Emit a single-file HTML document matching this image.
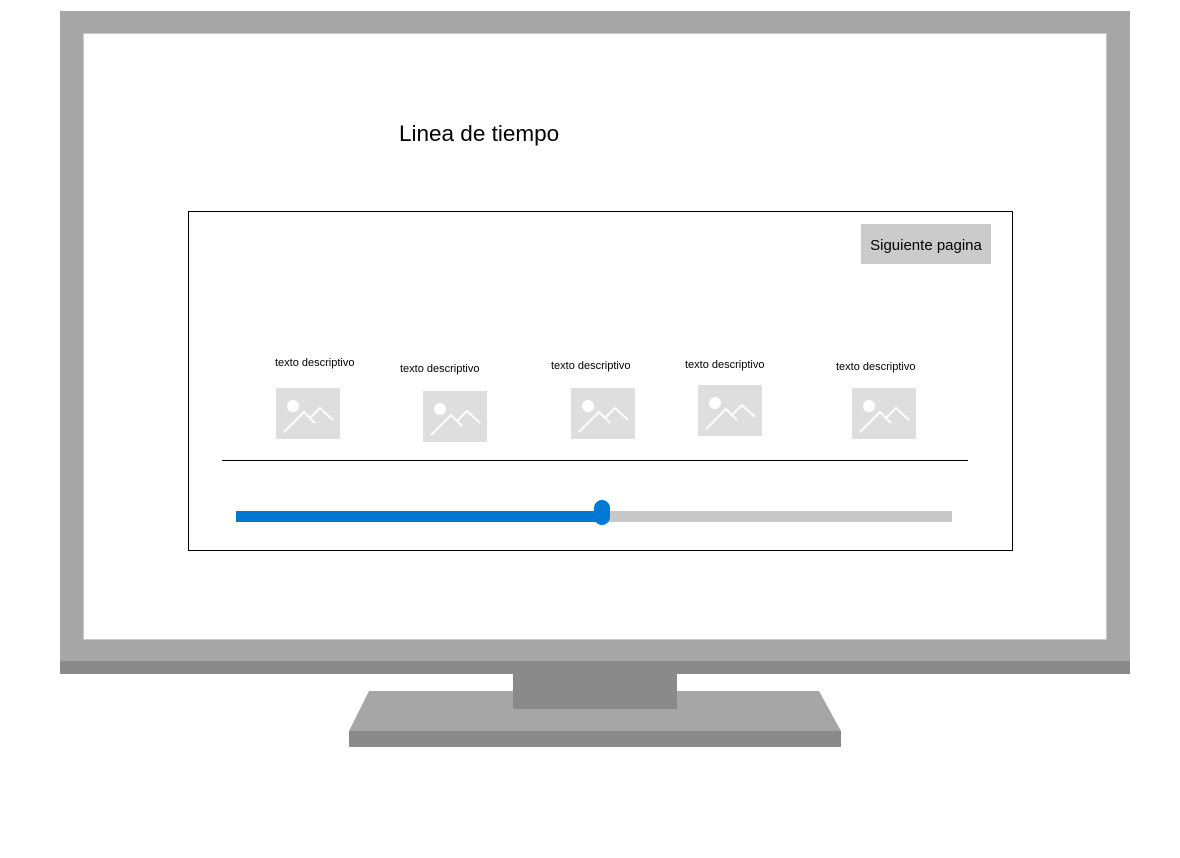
<!DOCTYPE html>
<html><head><style>
body{margin:0;width:1180px;height:858px;background:#fff;position:relative;overflow:hidden;font-family:"Liberation Sans",sans-serif}
div{position:absolute;box-sizing:border-box}
.lbl{font-size:11px;color:#000;white-space:nowrap}
</style></head><body>
<div style="left:60px;top:11px;width:1070px;height:650px;background:#a6a6a6"></div>
<div style="left:60px;top:661px;width:1070px;height:13px;background:#8a8a8a"></div>
<div style="left:83px;top:33px;width:1024px;height:607px;background:#fff;border:1px solid #c8c8c8"></div>
<svg style="position:absolute;left:0;top:0" width="1180" height="858">
<polygon points="369,691 819,691 841,731 349,731" fill="#a6a6a6"/>
<rect x="349" y="731" width="492" height="16" fill="#8a8a8a"/>
<rect x="513" y="674" width="164" height="35" fill="#8a8a8a"/>
</svg>
<div style="left:399px;top:121px;font-size:22.5px;color:#000">Linea de tiempo</div>
<div style="left:188px;top:211px;width:825px;height:340px;border:1px solid #000"></div>
<div style="left:861px;top:224px;width:130px;height:40px;background:#cbcbcb;font-size:15px;line-height:43px;text-align:center;color:#000">Siguiente pagina</div>
<div class="lbl" style="left:275px;top:357px">texto descriptivo</div>
<div class="lbl" style="left:400px;top:363px">texto descriptivo</div>
<div class="lbl" style="left:551px;top:360px">texto descriptivo</div>
<div class="lbl" style="left:685px;top:359px">texto descriptivo</div>
<div class="lbl" style="left:836px;top:361px">texto descriptivo</div>
<svg style="position:absolute;left:0;top:0" width="1180" height="858">
<defs><g id="ic"><rect width="64" height="51" fill="#dedede"/><circle cx="17" cy="18" r="6" fill="#fff"/><polyline points="8,44 28,24 39,35" fill="none" stroke="#fff" stroke-width="2"/><polyline points="34,30 44,20 57,32" fill="none" stroke="#fff" stroke-width="2"/></g></defs>
<use href="#ic" x="276" y="388"/><use href="#ic" x="423" y="391"/><use href="#ic" x="571" y="388"/><use href="#ic" x="698" y="385"/><use href="#ic" x="852" y="388"/>
<rect x="222" y="460" width="746" height="1" fill="#000"/>
<rect x="236" y="511" width="716" height="11" fill="#c8c8c8"/>
<rect x="236" y="511" width="366" height="11" fill="#0078d4"/>
<rect x="594" y="500" width="16" height="25" rx="8" fill="#0078d4"/>
</svg>
</body></html>
